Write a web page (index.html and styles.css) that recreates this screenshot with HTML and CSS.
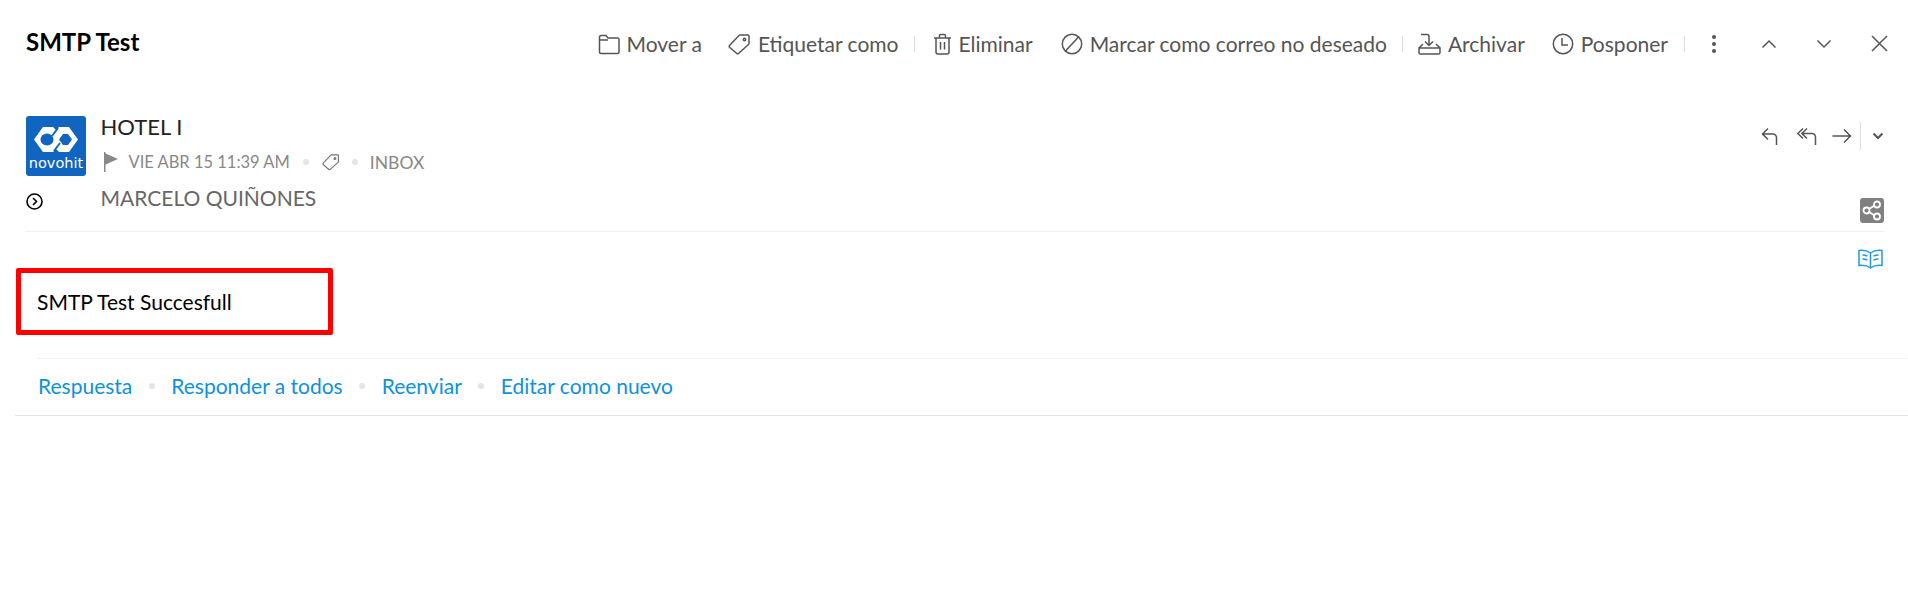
FILE: index.html
```html
<!DOCTYPE html>
<html lang="en">
<head>
  <meta charset="UTF-8" />
  <title>SMTP Test</title>
  <link rel="stylesheet" href="styles.css">
</head>
<body>
  <!-- Top bar -->
  <div class="topbar">
    <div class="subject">SMTP Test</div>
    <div class="tools">
      <span class="tool t-move">
        <svg class="ico" width="22" height="22" viewBox="0 0 22 22"><path d="M1.500 19V4a1.500 1.500 0 0 1 1.500-1.500h5l2 2.500h9.500A1.500 1.500 0 0 1 21 6.500V19a1.500 1.500 0 0 1-1.500 1.500H3A1.500 1.500 0 0 1 1.500 19zM1.500 7H10"/></svg>
        Mover a
      </span>
      <span class="tool t-tag">
        <svg class="ico" width="23" height="22" viewBox="0 0 23 22"><path d="M1.500 12.500 11 2.500a1.500 1.500 0 0 1 1-.5h8a1 1 0 0 1 1 1v7.500a1.500 1.500 0 0 1-.5 1L10.500 20.500a1.200 1.200 0 0 1-1.700 0l-7.300-6.300a1.200 1.200 0 0 1 0-1.700z"/><circle cx="16.500" cy="6.500" r="1.200"/></svg>
        Etiquetar como
      </span>
      <i class="sep sep-a"></i>
      <span class="tool t-del">
        <svg class="ico" width="19" height="22" viewBox="0 0 19 22"><path d="M1 5h17M6.500 5V2.500a1 1 0 0 1 1-1h4a1 1 0 0 1 1 1V5M3 5v14a2 2 0 0 0 2 2h9a2 2 0 0 0 2-2V5M7.500 9v7.500M11.500 9v7.500"/></svg>
        Eliminar
      </span>
      <span class="tool t-spam">
        <svg class="ico" width="22" height="22" viewBox="0 0 22 22"><circle cx="11" cy="11" r="9.700"/><path d="M4.500 18 17.500 4"/></svg>
        Marcar como correo no deseado
      </span>
      <i class="sep sep-b"></i>
      <span class="tool t-arch">
        <svg class="ico" width="23" height="22" viewBox="0 0 23 22"><path d="M3 1.500h6a2 2 0 0 1 2 2V12M7 8.500l4 4 4-4M1 15l4-4M22 15l-4-4M1 15h21v4.500a1.500 1.500 0 0 1-1.500 1.500h-18A1.500 1.500 0 0 1 1 19.500z"/></svg>
        Archivar
      </span>
      <span class="tool t-snooze">
        <svg class="ico" width="22" height="22" viewBox="0 0 22 22"><circle cx="11" cy="11" r="9.700"/><path d="M10 5v7h6"/></svg>
        Posponer
      </span>
      <i class="sep sep-c"></i>
      <svg class="ctl ctl-dots" width="6" height="20" viewBox="0 0 6 20"><circle cx="3" cy="3" r="2"/><circle cx="3" cy="10" r="2"/><circle cx="3" cy="17" r="2"/></svg>
      <svg class="ico ctl ctl-up" width="16" height="10" viewBox="0 0 16 10"><path d="M1.500 8.500 8 2l6.500 6.500"/></svg>
      <svg class="ico ctl ctl-down" width="16" height="10" viewBox="0 0 16 10"><path d="M1.500 1.500 8 8l6.500-6.500"/></svg>
      <svg class="ico ctl ctl-close" width="17" height="17" viewBox="0 0 17 17"><path d="M1 1l15 15M16 1 1 16"/></svg>
    </div>
  </div>

  <!-- Message header -->
  <div class="head">
    <div class="left-col">
      <div class="logo">
        <svg width="46" height="27" viewBox="0 0 46 27"><path class="logo-hex" d="M10 1h10l3 3 3-3h10l9 12.500L36 26H26l-3-3-3 3H10L1 13.500z"/><ellipse class="logo-hole" cx="14" cy="13.500" rx="6.500" ry="6"/><path class="logo-hole" d="M26 13.500 30 8h5l4 5.500-4 5.500h-5z"/><path class="logo-cut" d="M19 10l6-8M27 17l-6 8"/></svg>
        <span class="logo-name">novohit</span>
      </div>
      <svg class="expand" width="17" height="17" viewBox="0 0 17 17"><circle cx="8.500" cy="8.500" r="7.500"/><path d="M7 5l3.500 3.500L7 12"/></svg>
    </div>
    <div class="info">
      <div class="sender">HOTEL I</div>
      <div class="meta">
        <svg class="flag" width="15" height="20" viewBox="0 0 15 20"><path d="M1 0h1.500v20H1zM2.500 1.500 15 7 2.500 12.500z"/></svg>
        <span class="date">VIE ABR 15 11:39 AM</span>
        <i class="dot"></i>
        <svg class="ico mini-tag" width="18" height="18" viewBox="0 0 23 22"><path d="M1.500 12.500 11 2.500a1.500 1.500 0 0 1 1-.5h8a1 1 0 0 1 1 1v7.500a1.500 1.500 0 0 1-.5 1L10.500 20.500a1.200 1.200 0 0 1-1.700 0l-7.300-6.300a1.200 1.200 0 0 1 0-1.700z"/><circle cx="16.500" cy="6.500" r="1.200"/></svg>
        <i class="dot dot-last"></i>
        <span class="folder">INBOX</span>
      </div>
      <div class="to">MARCELO QUIÑONES</div>
    </div>
    <div class="right-col">
      <div class="actions">
        <svg class="ico" width="17" height="19" viewBox="0 0 17 19"><path d="M7 1.500 1.500 7 7 12.500M1.500 7H12a3.500 3.500 0 0 1 3.500 3.500V18"/></svg>
        <svg class="ico act-all" width="20" height="19" viewBox="0 0 20 19"><path d="M6 1.500.8 6.500 6 11.500M10 1.500 4.800 6.500 10 11.500M4.800 6.500H15a3.500 3.500 0 0 1 3.500 3.500V18"/></svg>
        <svg class="ico act-fwd" width="20" height="16" viewBox="0 0 20 16"><path d="M.5 8h18M12 1.500 18.500 8 12 14.500"/></svg>
        <i class="act-sep"></i>
        <svg class="ico act-more" width="12" height="8" viewBox="0 0 12 8"><path class="thick" d="M1.500 1.500 6 6l4.500-4.500"/></svg>
      </div>
      <svg class="share" width="24" height="25" viewBox="0 0 24 25"><rect width="24" height="25" rx="3"/><path d="M9 11l5.500-3.500M9 14l5.500 3.500"/><circle cx="6.500" cy="12.500" r="3"/><circle cx="17" cy="6.500" r="3"/><circle cx="17" cy="18.500" r="3"/></svg>
    </div>
  </div>

  <!-- Body -->
  <div class="body-row">
    <div class="message">SMTP Test Succesfull</div>
    <svg class="book" width="25" height="20" viewBox="0 0 25 20"><path d="M12.500 4Q8 .8 1 1.500v15q7-.7 11.500 2.500Q17 15.800 24 16.500v-15Q17 .8 12.500 4zM12.500 4v15M4.500 6q2.500 0 5 1M4.500 10q2.500 0 5 1M15.500 7q2.500-1 5-1M15.500 11q2.500-1 5-1"/></svg>
  </div>

  <!-- Quick actions -->
  <div class="quick-wrap">
    <div class="quick">
      <a>Respuesta</a><i class="dot"></i>
      <a>Responder a todos</a><i class="dot"></i>
      <a>Reenviar</a><i class="dot"></i>
      <a>Editar como nuevo</a>
    </div>
  </div>
</body>
</html>
```

FILE: styles.css
```css
body {
  margin: 0;
  font-family: Lato, "Open Sans", sans-serif;
  background-color: #ffffff;
  color: #000;
  height: 606px;
  overflow: hidden;
}

.ico {
  fill: none;
  stroke: #555;
  stroke-width: 1.5;
  flex: none;
}

/* top bar */
.topbar {
  display: flex;
  justify-content: space-between;
  align-items: center;
  height: 84px;
  padding-left: 26px;
  padding-right: 20px;
}

.subject {
  font-size: 24px;
  font-weight: 700;
  margin-top: -1px;
}

.tools {
  display: flex;
  align-items: center;
  font-size: 21px;
  color: #555;
  margin-top: 3px;
}

.tool {
  display: flex;
  align-items: center;
  gap: 7px;
}

.t-tag { margin-left: 26px; }
.t-del { margin-left: 18px; }
.t-spam { margin-left: 28px; }
.t-arch { margin-left: 15px; }
.t-snooze { margin-left: 27px; }

.sep {
  width: 1px;
  height: 16px;
  background-color: #ddd;
}

.sep-a { margin-left: 15px; }
.sep-b { margin-left: 15px; }
.sep-c { margin-left: 16px; }

.ctl-dots { fill: #555; margin-left: 26px; }
.ctl-up { margin-left: 44px; }
.ctl-down { margin-left: 39px; }
.ctl-close { margin-left: 39px; }

/* message header */
.head {
  display: flex;
  margin: 0 24px 0 25px;
  padding-top: 32px;
  height: 115px;
  border-bottom: 1px solid #f0f0f0;
}

.left-col {
  width: 75.5px;
  flex: none;
}

.logo {
  width: 60px;
  height: 60px;
  margin-left: 1px;
  border-radius: 3px;
  background-color: #1065c0;
  display: flex;
  flex-direction: column;
  align-items: center;
  padding-top: 10px;
  box-sizing: border-box;
}

.logo-hex { fill: #fff; }
.logo-hole { fill: #1065c0; }
.logo-cut { stroke: #1065c0; stroke-width: 2; }

.logo-name {
  color: #fff;
  font-family: "DejaVu Sans", sans-serif;
  font-size: 14.5px;
  line-height: 14px;
  margin-top: 3px;
}

.expand {
  display: block;
  margin: 17px 0 0 1px;
  fill: none;
  stroke: #000;
  stroke-width: 1.6;
}

.info { flex: 1; }

.sender {
  font-size: 22px;
  line-height: 26px;
  color: #222;
  margin-top: -2px;
}

.meta {
  display: flex;
  align-items: center;
  font-size: 16.5px;
  color: #888;
  height: 24px;
  margin-top: 10px;
}

.flag {
  fill: #888;
  margin-left: 2px;
  margin-right: 11px;
}

.dot {
  width: 6px;
  height: 6px;
  border-radius: 50%;
  background-color: #e4e4e4;
  flex: none;
}

.meta .dot { margin: 0 13px; }
.meta .dot-last { margin: 0 12px; }
.mini-tag { stroke: #777; }
.folder { font-size: 17.5px; }

.to {
  font-size: 21px;
  line-height: 24px;
  color: #666;
  margin-top: 12px;
}

.right-col {
  display: flex;
  flex-direction: column;
  align-items: flex-end;
}

.actions {
  display: flex;
  align-items: center;
  height: 28px;
  margin-top: 6px;
}

.act-all { margin-left: 19px; }
.act-fwd { margin-left: 15px; }

.act-sep {
  width: 1px;
  height: 28px;
  background-color: #ddd;
  margin-left: 8px;
}

.act-more { margin-left: 11px; }
.thick { stroke-width: 2; }

.share {
  margin-top: 48px;
  fill: #808080;
}

.share circle {
  fill: #808080;
  stroke: #fff;
  stroke-width: 1.8;
}

.share path {
  stroke: #fff;
  stroke-width: 1.8;
}

/* body */
.body-row {
  display: flex;
  justify-content: space-between;
  align-items: flex-start;
  padding: 13px 25px 0 16px;
  height: 126px;
  box-sizing: border-box;
}

.message {
  width: 317px;
  height: 67px;
  margin-top: 23px;
  box-sizing: border-box;
  border: 5px solid #ff0000;
  border-radius: 2px;
  padding-left: 16px;
  line-height: 57px;
  font-size: 21px;
}

.book {
  margin-top: 4px;
  fill: none;
  stroke: #1f9ae0;
  stroke-width: 1.5;
}

/* quick actions */
.quick-wrap {
  margin-left: 15px;
  border-bottom: 1px solid #e2e2e2;
}

.quick {
  display: flex;
  align-items: center;
  gap: 16.5px;
  margin-left: 23px;
  height: 57px;
  padding-bottom: 3px;
  font-size: 21px;
  color: #0d92dd;
  border-top: 1px dotted #eaeaea;
  box-sizing: border-box;
}
```
